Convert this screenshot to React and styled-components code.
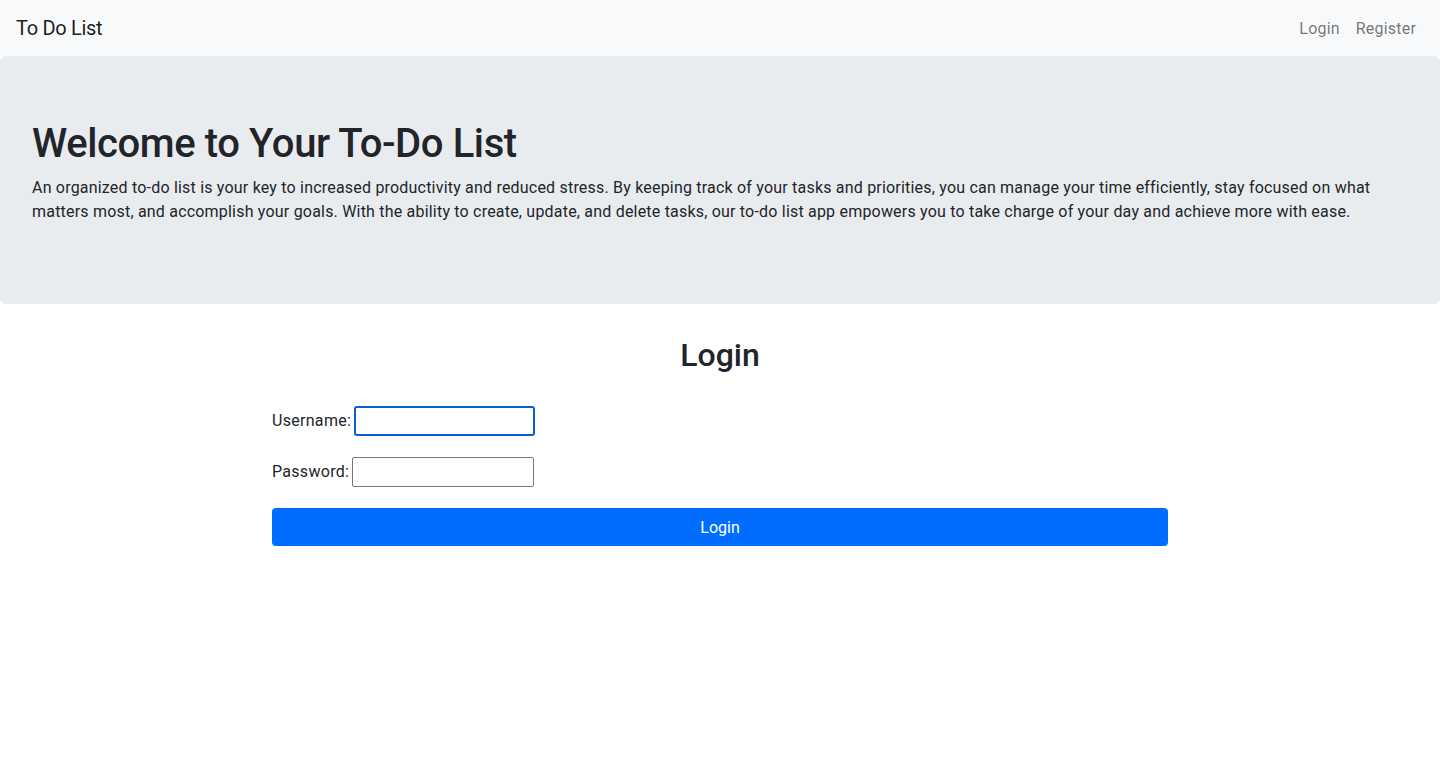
import styled, { createGlobalStyle } from 'styled-components';

const GlobalStyle = createGlobalStyle`
  body {
    margin: 0;
    font-family: Roboto, "Noto Sans", "Liberation Sans", sans-serif;
    font-size: 16px;
    line-height: 1.5;
    color: #212529;
    background: #fff;
  }
  * { box-sizing: border-box; }
`;

const Navbar = styled.nav`
  height: 56px;
  background: #f8f9fa;
  display: flex;
  align-items: center;
  justify-content: space-between;
  padding: 0 16px;
`;

const Brand = styled.a`
  font-size: 20px;
  color: rgba(0, 0, 0, 0.9);
  text-decoration: none;
  letter-spacing: -0.3px;
`;

const NavLinks = styled.div`
  display: flex;
  gap: 16px;
  margin-right: 8px;
  padding-top: 2px;
`;

const NavLink = styled.a`
  color: rgba(0, 0, 0, 0.55);
  text-decoration: none;
  font-size: 16px;
  letter-spacing: 0.2px;
`;

const Jumbotron = styled.header`
  background: #e9ecef;
  border-radius: 6px;
  padding: 64px 32px;
  margin-bottom: 32px;
`;

const Title = styled.h1`
  margin: 0 0 8px;
  font-size: 40px;
  font-weight: 500;
  line-height: 1.2;
  letter-spacing: -0.4px;
`;

const Lead = styled.p`
  margin: 0 0 16px;
  font-size: 16px;
  letter-spacing: 0.2px;
`;

const FormWrap = styled.main`
  width: 896px;
  margin: 0 auto;
`;

const FormTitle = styled.h2`
  margin: 0 0 8px;
  text-align: center;
  font-size: 32px;
  font-weight: 500;
  line-height: 1.2;
`;

const Form = styled.form`
  display: flex;
  flex-direction: column;
  padding-top: 24px;
`;

const Field = styled.div`
  display: flex;
  align-items: center;
  gap: 3px;
  margin-bottom: 21px;
`;

const Label = styled.label`
  font-size: 16px;
  letter-spacing: 0.3px;
`;

const Input = styled.input`
  width: ${p => (p.$focused ? '181px' : '182px')};
  height: 30px;
  padding: 2px 4px;
  font: inherit;
  border-radius: ${p => (p.$focused ? '3px' : '2px')};
  border: ${p => (p.$focused ? '2px solid #0a5bd8' : '1px solid #767676')};
  outline: none;
  background: #fff;
`;

const Button = styled.button`
  height: 38px;
  width: 100%;
  padding: 1px 0 0;
  border: none;
  border-radius: 4px;
  background: #006dff;
  color: #fff;
  font: inherit;
  font-size: 16px;
  cursor: pointer;
`;

export default function App() {
  return (
    <>
      <GlobalStyle />
      <Navbar>
        <Brand href="#">To Do List</Brand>
        <NavLinks>
          <NavLink href="#">Login</NavLink>
          <NavLink href="#">Register</NavLink>
        </NavLinks>
      </Navbar>
      <Jumbotron>
        <Title>Welcome to Your To-Do List</Title>
        <Lead>
          An organized to-do list is your key to increased productivity and reduced stress. By keeping
          track of your tasks and priorities, you can manage your time efficiently, stay focused on what
          matters most, and accomplish your goals. With the ability to create, update, and delete tasks,
          our to-do list app empowers you to take charge of your day and achieve more with ease.
        </Lead>
      </Jumbotron>
      <FormWrap>
        <FormTitle>Login</FormTitle>
        <Form onSubmit={e => e.preventDefault()}>
          <Field>
            <Label htmlFor="username">Username:</Label>
            <Input id="username" type="text" $focused />
          </Field>
          <Field>
            <Label htmlFor="password">Password:</Label>
            <Input id="password" type="password" />
          </Field>
          <Button type="submit">Login</Button>
        </Form>
      </FormWrap>
    </>
  );
}
